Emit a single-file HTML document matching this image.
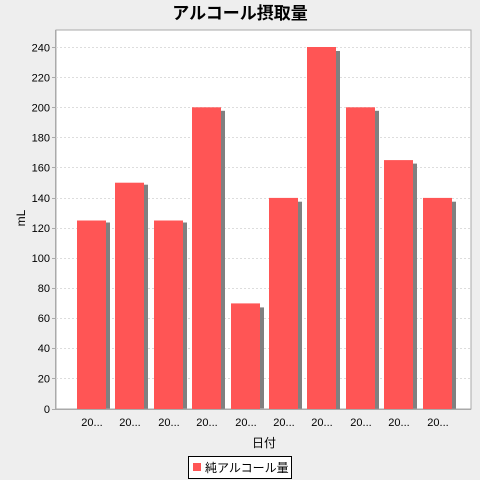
<!DOCTYPE html><html><head><style>body{margin:0;background:#eeeeee}svg{display:block}text{font-family:"Liberation Sans","Noto Sans CJK JP",sans-serif}</style></head><body>
<svg width="480" height="480" viewBox="0 0 480 480">
<rect width="480" height="480" fill="#eeeeee"/>
<text x="240" y="19" text-anchor="middle" font-size="17" font-weight="bold" fill="#000">アルコール摂取量</text>
<rect x="56" y="30" width="415" height="379" fill="#fff" stroke="#aaa" stroke-width="1"/>
<g stroke="#ddd" stroke-dasharray="2,2" stroke-width="1">
<line x1="56" x2="471" y1="47.5" y2="47.5"/><line x1="56" x2="471" y1="77.5" y2="77.5"/><line x1="56" x2="471" y1="107.5" y2="107.5"/><line x1="56" x2="471" y1="137.5" y2="137.5"/><line x1="56" x2="471" y1="167.5" y2="167.5"/><line x1="56" x2="471" y1="198.5" y2="198.5"/><line x1="56" x2="471" y1="228.5" y2="228.5"/><line x1="56" x2="471" y1="258.5" y2="258.5"/><line x1="56" x2="471" y1="288.5" y2="288.5"/><line x1="56" x2="471" y1="318.5" y2="318.5"/><line x1="56" x2="471" y1="348.5" y2="348.5"/><line x1="56" x2="471" y1="378.5" y2="378.5"/>
</g>
<g fill="#808080">
<rect x="81" y="222.5" width="29" height="186"/><rect x="119" y="184.7" width="29" height="224"/><rect x="158" y="222.5" width="29" height="186"/><rect x="196" y="110.8" width="29" height="298"/><rect x="235" y="307.4" width="29" height="101"/><rect x="273" y="201.7" width="29" height="207"/><rect x="311" y="51" width="29" height="358"/><rect x="350" y="110.8" width="29" height="298"/><rect x="388" y="163.6" width="29" height="245"/><rect x="427" y="201.7" width="29" height="207"/>
</g>
<g fill="#ff5555">
<rect x="77" y="220.5" width="29" height="188.5"/><rect x="115" y="182.7" width="29" height="226.3"/><rect x="154" y="220.5" width="29" height="188.5"/><rect x="192" y="107.3" width="29" height="301.7"/><rect x="231" y="303.4" width="29" height="105.6"/><rect x="269" y="197.9" width="29" height="211.1"/><rect x="307" y="47" width="29" height="362"/><rect x="346" y="107.3" width="29" height="301.7"/><rect x="384" y="160.1" width="29" height="248.9"/><rect x="423" y="197.9" width="29" height="211.1"/>
</g>
<line x1="56" x2="471" y1="409.5" y2="409.5" stroke="#aaa"/>
<line x1="55.5" x2="55.5" y1="30" y2="410" stroke="#aaa"/>
<g stroke="#aaa"><line x1="52" x2="56" y1="47.5" y2="47.5"/><line x1="52" x2="56" y1="77.5" y2="77.5"/><line x1="52" x2="56" y1="107.5" y2="107.5"/><line x1="52" x2="56" y1="137.5" y2="137.5"/><line x1="52" x2="56" y1="167.5" y2="167.5"/><line x1="52" x2="56" y1="198.5" y2="198.5"/><line x1="52" x2="56" y1="228.5" y2="228.5"/><line x1="52" x2="56" y1="258.5" y2="258.5"/><line x1="52" x2="56" y1="288.5" y2="288.5"/><line x1="52" x2="56" y1="318.5" y2="318.5"/><line x1="52" x2="56" y1="348.5" y2="348.5"/><line x1="52" x2="56" y1="378.5" y2="378.5"/><line x1="52" x2="56" y1="409.5" y2="409.5"/></g>
<g font-size="11" fill="#000" text-anchor="end">
<text x="50" y="51.5">240</text><text x="50" y="81.5">220</text><text x="50" y="111.5">200</text><text x="50" y="141.5">180</text><text x="50" y="171.5">160</text><text x="50" y="202">140</text><text x="50" y="232">120</text><text x="50" y="262">100</text><text x="50" y="292">80</text><text x="50" y="322">60</text><text x="50" y="352">40</text><text x="50" y="382.5">20</text><text x="50" y="413">0</text>
</g>
<g font-size="11" fill="#000" text-anchor="middle">
<text x="92" y="426">20...</text><text x="130" y="426">20...</text><text x="169" y="426">20...</text><text x="207" y="426">20...</text><text x="246" y="426">20...</text><text x="284" y="426">20...</text><text x="322" y="426">20...</text><text x="361" y="426">20...</text><text x="399" y="426">20...</text><text x="438" y="426">20...</text>
</g>
<text x="264" y="447" font-size="12" text-anchor="middle">日付</text>
<text transform="translate(25,218) rotate(-90)" font-size="12" text-anchor="middle">mL</text>
<rect x="188.5" y="456.5" width="103" height="22" fill="#fff" stroke="#000"/>
<rect x="193" y="463" width="8" height="8" fill="#ff5555"/>
<text x="205" y="472" font-size="12">純アルコール量</text>
</svg>
</body></html>
